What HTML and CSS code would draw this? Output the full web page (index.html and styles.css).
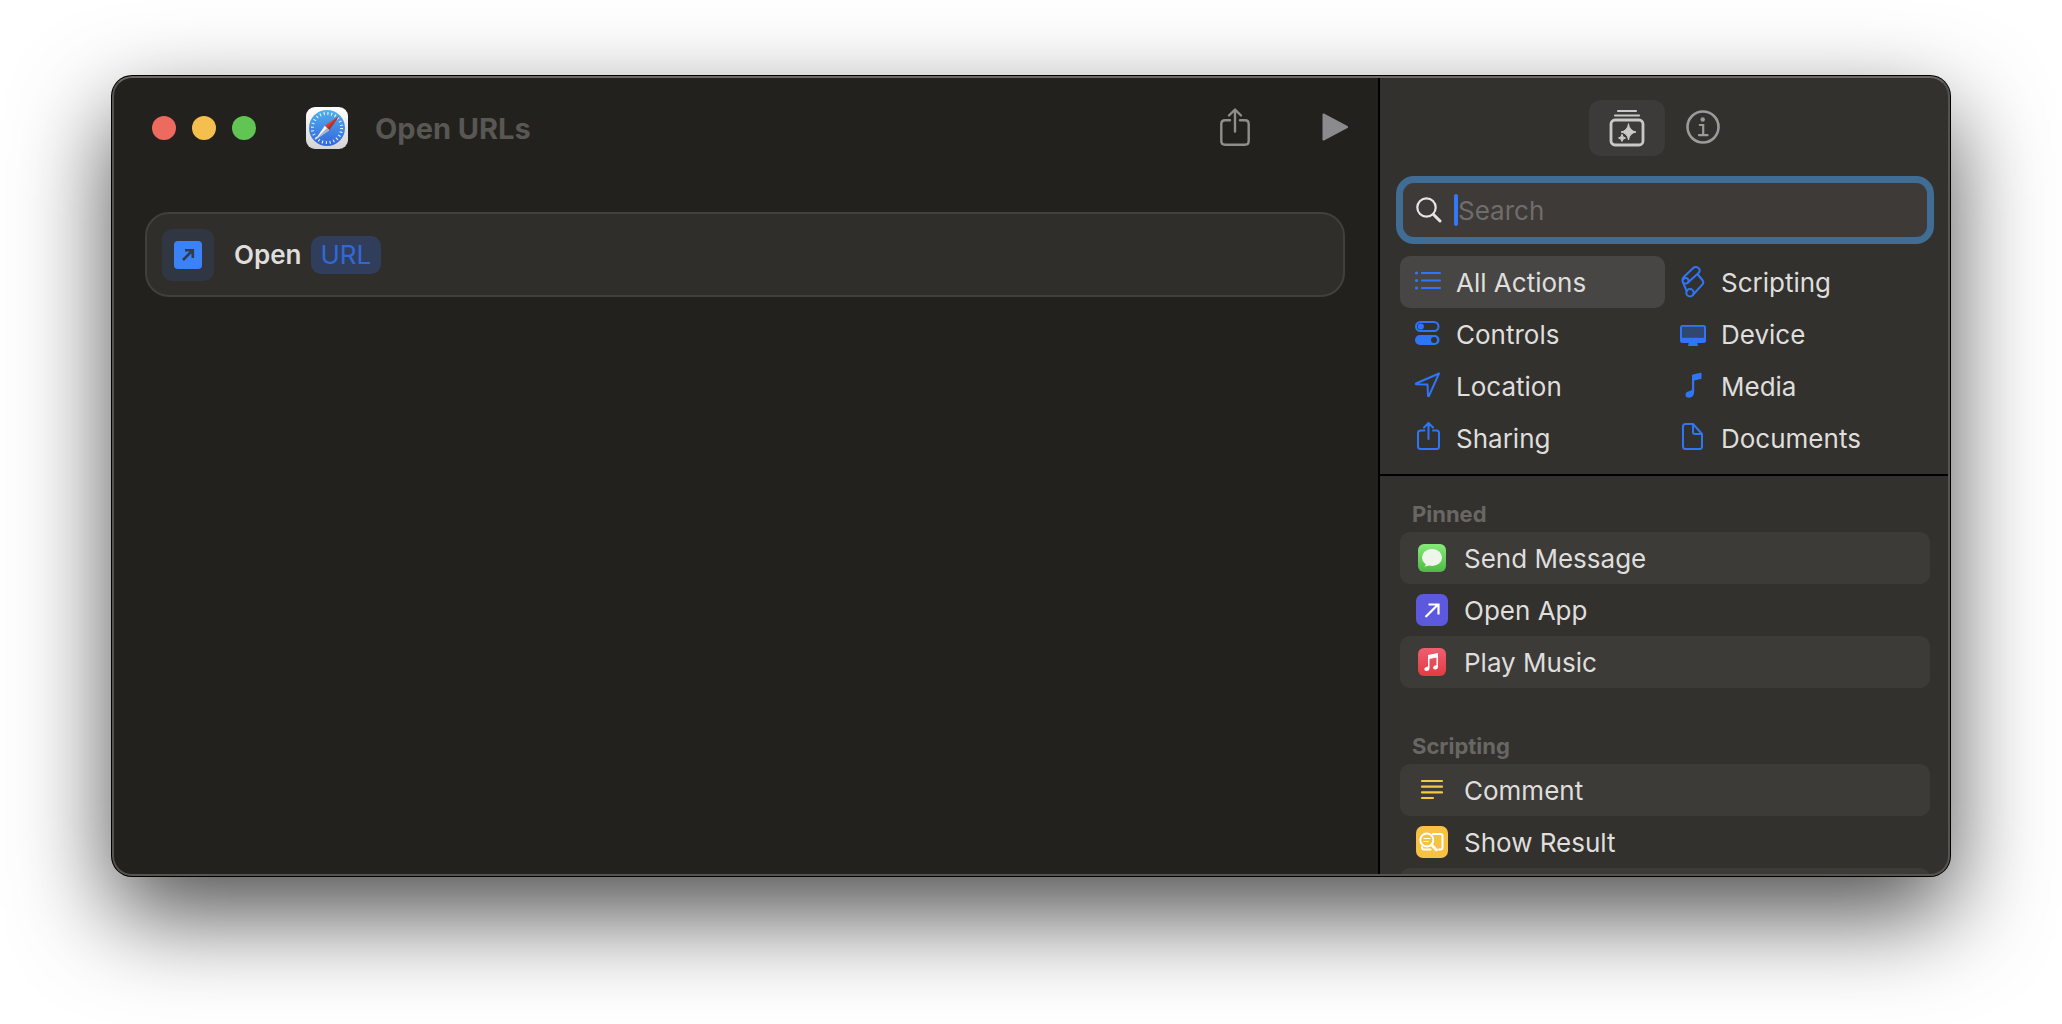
FILE: index.html
```
<!DOCTYPE html>
<html lang="en">
<head>
<meta charset="UTF-8">
<meta name="viewport" content="width=device-width, initial-scale=1.0">
<title>Open URLs</title>
<link rel="stylesheet" href="styles.css">
</head>
<body>
<div class="window">
    <main class="editor">
        <header class="toolbar">
            <div class="lights">
                <button class="light red" aria-label="Close"></button>
                <button class="light yellow" aria-label="Minimize"></button>
                <button class="light green" aria-label="Zoom"></button>
            </div>
            <svg class="app-icon" viewBox="0 0 42 42">
                <defs>
                    <linearGradient id="tile" x1="0" y1="0" x2="0" y2="1">
                        <stop offset="0" stop-color="#ffffff"/>
                        <stop offset="1" stop-color="#d4d4d4"/>
                    </linearGradient>
                    <linearGradient id="dial" x1="0" y1="0" x2="0" y2="1">
                        <stop offset="0" stop-color="#4fb0ee"/>
                        <stop offset="1" stop-color="#3465dc"/>
                    </linearGradient>
                </defs>
                <rect width="42" height="42" rx="9" fill="url(#tile)"/>
                <circle cx="21" cy="21" r="18" fill="url(#dial)"/>
                <circle cx="21" cy="21" r="14.6" fill="none" stroke="#e4f1fc" stroke-width="3" stroke-dasharray="1.1 2.72"/>
                <path d="M33 9L23.2 23.2L18.8 18.8Z" fill="#e0392f"/>
                <path d="M33 9L23.2 23.2L21 21Z" fill="#a5362f"/>
                <path d="M9 33L18.8 18.8L23.2 23.2Z" fill="#f5f7fa"/>
                <path d="M9 33L21 21L23.2 23.2Z" fill="#aab4c0"/>
            </svg>
            <h1 class="title">Open URLs</h1>
            <div class="tools">
                <button class="tool" aria-label="Share">
                    <svg width="30" height="40" viewBox="0 0 30 40" fill="none" stroke="#8f8e8b" stroke-width="2.400" stroke-linecap="round" stroke-linejoin="round">
                        <path d="M10 12.200H5Q1.300 12.200 1.300 16V33Q1.300 36.700 5 36.700H25Q28.700 36.700 28.700 33V16Q28.700 12.200 25 12.200H20M15 23.500V2M9 7.500L15 1.500L21 7.500"/>
                    </svg>
                </button>
                <button class="tool" aria-label="Run">
                    <svg width="26" height="30" viewBox="0 0 26 30" fill="#8b8a8c" stroke="#8b8a8c" stroke-width="2" stroke-linejoin="round">
                        <path d="M1.500 1.500L25 14L1.500 26.500Z"/>
                    </svg>
                </button>
            </div>
        </header>
        <section class="action">
            <div class="action-icon">
                <svg width="28" height="28" viewBox="0 0 28 28">
                    <rect width="28" height="28" rx="4" fill="#3b82f7"/>
                    <path d="M9 19L18 10M11 9.200H18.800V17" fill="none" stroke="#2f3b4f" stroke-width="2.600"/>
                </svg>
            </div>
            <span class="verb">Open</span>
            <button class="token">URL</button>
        </section>
    </main>

    <aside class="sidebar">
        <div class="tabs">
            <button class="tab active" aria-label="Action library">
                <svg width="36" height="40" viewBox="0 0 36 40" fill="none" stroke="#cbc9c7" stroke-linecap="round">
                    <path d="M9 3H27M6 7.500H30" stroke-width="2.200"/>
                    <rect x="2" y="12" width="32" height="25" rx="4" stroke-width="2.800"/>
                    <path d="M19.500 16Q20.500 22.800 27 24Q20.500 25.200 19.500 32Q18.500 25.200 12 24Q18.500 22.800 19.500 16Z" fill="#cbc9c7"/>
                    <path d="M13 26.500Q13.500 29.500 16.500 30Q13.500 30.500 13 33.500Q12.500 30.500 9.500 30Q12.500 29.500 13 26.500Z" fill="#cbc9c7"/>
                </svg>
            </button>
            <button class="tab" aria-label="Shortcut details">
                <svg width="34" height="36" viewBox="0 0 34 36" fill="none" stroke="#9d9b99" stroke-width="2.600" stroke-linecap="round">
                    <circle cx="17" cy="17" r="15.500"/>
                    <circle cx="16.700" cy="9.500" r="2.200" fill="#9d9b99" stroke="none"/>
                    <path d="M13.800 15H17.200V25M13 25.200H21.500" stroke-width="2.200"/>
                </svg>
            </button>
        </div>

        <label class="search">
            <svg width="26" height="26" viewBox="0 0 26 26" fill="none" stroke="#e6e5e3" stroke-linecap="round">
                <circle cx="10.500" cy="10.500" r="9.200" stroke-width="2.200"/>
                <path d="M17.500 17.500L24 24" stroke-width="3"/>
            </svg>
            <span class="caret"></span>
            <input type="text" placeholder="Search" aria-label="Search">
        </label>

        <nav class="categories">
            <a class="category selected" href="#">
                <svg viewBox="0 0 32 32" stroke="#2f76f6" stroke-width="2.200" stroke-linecap="round">
                    <path d="M10 7H28M10 14.500H28M10 22H28"/>
                    <path d="M4.500 7H4.600M4.500 14.500H4.600M4.500 22H4.600" stroke-width="3.200"/>
                </svg>
                <span>All Actions</span>
            </a>
            <a class="category" href="#">
                <svg viewBox="0 -1 32 32" fill="none" stroke="#2f76f6" stroke-width="2" stroke-linejoin="round" stroke-linecap="round">
                    <path d="M11.500 15L21.500 6Q24 3 21.500 1Q18.500 -1 16 1.200L7 9.800Q4.500 12.500 6 15.500L9.700 24"/>
                    <path d="M6.300 12.500Q7.500 10.500 9.800 11.200Q12 12.300 11.500 15Q10.500 17 7.800 16.200"/>
                    <path d="M20.800 7.500L25.700 13.500Q27 15.500 25.500 17.300L15.800 28"/>
                    <circle cx="13" cy="25.800" r="3.700"/>
                </svg>
                <span>Scripting</span>
            </a>
            <a class="category" href="#">
                <svg viewBox="0 0 32 32">
                    <rect x="4" y="4" width="22.500" height="9" rx="4.500" fill="none" stroke="#2f76f6" stroke-width="2"/>
                    <circle cx="8.800" cy="8.500" r="3.100" fill="#2f76f6"/>
                    <rect x="3" y="17" width="24.500" height="10" rx="5" fill="#2f76f6"/>
                    <circle cx="22" cy="22" r="3" fill="#33312d"/>
                </svg>
                <span>Controls</span>
            </a>
            <a class="category" href="#">
                <svg viewBox="0 0 32 32">
                    <path d="M12 24H20L21 28H11Z" fill="#2f76f6"/>
                    <rect x="3" y="7" width="26" height="18" rx="2.500" fill="#2f76f6"/>
                    <rect x="5" y="8.800" width="22" height="11" fill="#30486f"/>
                </svg>
                <span>Device</span>
            </a>
            <a class="category" href="#">
                <svg viewBox="0 0 32 32" fill="none" stroke="#2f76f6" stroke-width="2" stroke-linejoin="round">
                    <path d="M27 3.500L4 13.500Q3.500 14 4.200 14.300L15.500 14.500L16 25.800Q16.500 26.500 17 25.800Z"/>
                </svg>
                <span>Location</span>
            </a>
            <a class="category" href="#">
                <svg viewBox="0 0 32 32" fill="#2f76f6">
                    <path d="M15 5.500Q15 4.600 16 4.400L23.500 2.800Q24.500 2.600 24.500 3.600V8Q24.500 8.800 23.600 9L17.200 10.400V21Q17.200 27.800 12 27.800Q8.500 27.800 8.500 24.800Q8.500 22 12 21.300Q15 20.800 15 19.500Z"/>
                </svg>
                <span>Media</span>
            </a>
            <a class="category" href="#">
                <svg viewBox="0 0 32 32" fill="none" stroke="#2f76f6" stroke-width="2" stroke-linecap="round" stroke-linejoin="round">
                    <path d="M12.500 8.500H9Q6 8.500 6 11V24.500Q6 27 9 27H24.500Q27 27 27 24.500V11Q27 8.500 24.500 8.500H21M16.500 17V1.500M12 5.500L16.500 1L21 5.500"/>
                </svg>
                <span>Sharing</span>
            </a>
            <a class="category" href="#">
                <svg viewBox="0 0 32 32" fill="none" stroke="#2f76f6" stroke-width="2" stroke-linejoin="round">
                    <path d="M16 2H8.500Q6 2 6 4.500V24.500Q6 27 8.500 27H22.500Q25 27 25 24.500V12M16 2L25 12H18Q16 12 16 10Z"/>
                </svg>
                <span>Documents</span>
            </a>
        </nav>

        <div class="library">
            <section class="group">
                <h2>Pinned</h2>
                <ul>
                    <li>
                        <svg viewBox="0 0 32 32">
                            <defs>
                                <linearGradient id="green" x1="0" y1="0" x2="0" y2="1">
                                    <stop offset="0" stop-color="#85ea78"/>
                                    <stop offset="1" stop-color="#4fba43"/>
                                </linearGradient>
                            </defs>
                            <rect x="2" y="2" width="28" height="28" rx="6" fill="url(#green)"/>
                            <ellipse cx="16" cy="15.500" rx="10" ry="8.500" fill="#eef6ec"/>
                            <path d="M10 20Q10 23 8.500 24.500Q12.500 24.500 14.500 22Z" fill="#eef6ec"/>
                        </svg>
                        <span>Send Message</span>
                    </li>
                    <li>
                        <svg viewBox="0 0 32 32">
                            <rect width="32" height="32" rx="7" fill="#5c59de"/>
                            <path d="M9.500 23L22 10.500M12.500 10.500H22.500V20.500" fill="none" stroke="#fff" stroke-width="2.200"/>
                        </svg>
                        <span>Open App</span>
                    </li>
                    <li>
                        <svg viewBox="0 0 32 32">
                            <defs>
                                <linearGradient id="pink" x1="0" y1="0" x2="0" y2="1">
                                    <stop offset="0" stop-color="#ee5f70"/>
                                    <stop offset="1" stop-color="#e43a44"/>
                                </linearGradient>
                            </defs>
                            <rect x="2" y="2" width="28" height="28" rx="6" fill="url(#pink)"/>
                            <path d="M12 9L22 7V20.500Q22 23.500 19 23.500Q17 23.300 17 21.500Q17.200 19.700 20.500 19V11.500L13.500 13V22Q13.500 25 10.500 25Q8.300 24.800 8.300 23Q8.500 21.300 12 20.500Z" fill="#fff"/>
                        </svg>
                        <span>Play Music</span>
                    </li>
                </ul>
            </section>
            <section class="group">
                <h2>Scripting</h2>
                <ul>
                    <li>
                        <svg viewBox="0 0 32 32" stroke="#f2cb46" stroke-width="2.200" stroke-linecap="round">
                            <path d="M6 7H26M6 12.700H26M6 18.400H26M6 24H17"/>
                        </svg>
                        <span>Comment</span>
                    </li>
                    <li>
                        <svg viewBox="0 0 32 32" fill="none" stroke="#fff" stroke-linecap="round">
                            <rect width="32" height="32" rx="7" fill="#f7c144" stroke="none"/>
                            <path d="M17 8H24.500Q26.500 8 26.500 10V21.500Q26.500 23.500 24.500 23.500H23M6 21Q6 23.500 8 23.500H14.500" stroke-width="2"/>
                            <circle cx="10.800" cy="14" r="6.500" stroke-width="2"/>
                            <path d="M8 12.500H14M8 15.500H12" stroke-width="1.200"/>
                            <path d="M15.800 19L20.500 24" stroke-width="2.800"/>
                        </svg>
                        <span>Show Result</span>
                    </li>
                    <li></li>
                </ul>
            </section>
        </div>
    </aside>
</div>
</body>
</html>
```
FILE: styles.css
```
* {
    box-sizing: border-box;
}
body {
    font-family: Inter, sans-serif;
    margin: 0;
    padding: 76px 112px 148px;
    height: 100vh;
    background-color: #fff;
    color: #dfdedc;
}
button {
    font: inherit;
    border: none;
    padding: 0;
    background: none;
    cursor: pointer;
}
.window {
    position: relative;
    display: flex;
    height: 100%;
    border-radius: 20px;
    overflow: hidden;
    background-color: #22211d;
    box-shadow: 0 0 0 1px #000, 0 38px 96px rgba(0, 0, 0, 0.7);
}
/* light rim on top of both panes */
.window::after {
    content: "";
    position: absolute;
    inset: 0;
    border: 2px solid #55544f;
    border-top-color: #6a6963;
    border-radius: 20px;
    pointer-events: none;
}
.editor {
    flex: 1;
    min-width: 0;
}
.toolbar {
    display: flex;
    align-items: center;
    height: 104px;
    padding: 0 30px 0 40px;
}
.lights {
    display: flex;
    gap: 16px;
    margin-right: 50px;
}
.light {
    width: 24px;
    height: 24px;
    border-radius: 50%;
}
.red {
    background-color: #ec6a5e;
}
.yellow {
    background-color: #f4bf4f;
}
.green {
    background-color: #61c554;
}
.app-icon {
    width: 42px;
    height: 42px;
    margin-right: 27px;
}
.title {
    margin: 0;
    font-size: 29px;
    font-weight: 700;
    color: #585754;
}
.tools {
    display: flex;
    align-items: center;
    gap: 72px;
    margin-left: auto;
}
.tool {
    display: flex;
}
.action {
    display: flex;
    align-items: center;
    height: 85px;
    margin: 32px 33px 0;
    padding: 0 15px;
    border: 2px solid #41403c;
    border-radius: 24px;
    background-color: #302e2b;
}
.action-icon {
    display: flex;
    align-items: center;
    justify-content: center;
    width: 52px;
    height: 52px;
    margin-right: 20px;
    border-radius: 10px;
    background-color: #303642;
}
.verb {
    margin-right: 9px;
    font-size: 26px;
    font-weight: 600;
}
.token {
    height: 38px;
    padding: 0 10px;
    border-radius: 10px;
    background-color: #303e5c;
    color: #3069d6;
    font-size: 26px;
}
.sidebar {
    display: flex;
    flex-direction: column;
    flex: 0 0 572px;
    border-left: 2px solid #000;
    background-color: #33312d;
}
.tabs {
    display: flex;
    justify-content: center;
    padding: 24px 0 20px;
}
.tab {
    display: flex;
    align-items: center;
    justify-content: center;
    width: 76px;
    height: 56px;
    border-radius: 12px;
}
.tab.active {
    background-color: #3d3b39;
}
.search {
    display: flex;
    align-items: center;
    flex-shrink: 0;
    height: 68px;
    margin: 0 16px;
    padding: 0 13px;
    border: 7px solid #416c93;
    border-radius: 18px;
    background-color: #3d3a38;
}
.caret {
    width: 4px;
    height: 32px;
    margin-left: 12px;
    border-radius: 2px;
    background-color: #3478f6;
}
.search input {
    flex: 1;
    min-width: 0;
    border: none;
    outline: none;
    padding: 0;
    background: none;
    color: inherit;
    font: inherit;
    font-size: 26px;
}
.search input::placeholder {
    color: #6f6d6b;
    opacity: 1;
}
.categories {
    display: grid;
    grid-template-columns: 1fr 1fr;
    padding: 12px 20px 10px;
    border-bottom: 2px solid #000;
}
.category {
    display: flex;
    align-items: center;
    gap: 12px;
    height: 52px;
    padding: 0 12px;
    border-radius: 10px;
    color: inherit;
    font-size: 26px;
    text-decoration: none;
}
.category.selected {
    background-color: #484644;
}
.category svg,
.group svg {
    width: 32px;
    height: 32px;
    flex-shrink: 0;
}
.library {
    flex: 1;
    min-height: 0;
    padding: 20px 20px 0;
    overflow: hidden;
}
.group {
    margin-bottom: 40px;
}
.group h2 {
    margin: 0;
    padding-left: 12px;
    font-size: 22px;
    font-weight: 700;
    line-height: 36px;
    color: #696763;
}
.group ul {
    list-style: none;
    margin: 0;
    padding: 0;
}
.group li {
    display: flex;
    align-items: center;
    gap: 16px;
    height: 52px;
    padding: 0 16px;
    border-radius: 10px;
    font-size: 26px;
}
.group li:nth-child(odd) {
    background-color: #3d3b38;
}
```
